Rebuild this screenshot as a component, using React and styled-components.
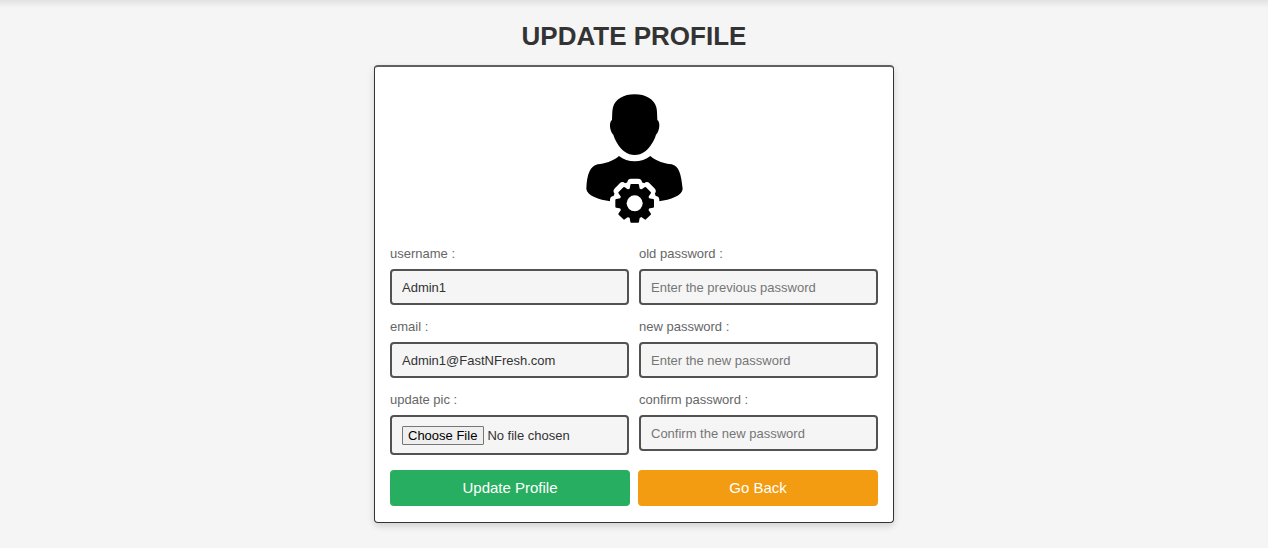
import React from "react";
import styled, { createGlobalStyle } from "styled-components";

const GlobalStyle = createGlobalStyle`
  *, *::before, *::after { box-sizing: border-box; }
  body {
    margin: 0;
    background: #f5f5f5;
    color: #333;
    font-family: Arial, "Liberation Sans", sans-serif;
    font-size: 13px;
  }
`;

const Header = styled.header`
  height: 8px;
  background: linear-gradient(#e2e2e2, #f5f5f5);
`;

const Page = styled.main`
  padding: 13px 16px 24px;
`;

const Title = styled.h1`
  margin: 0 0 14px;
  font-size: 26px;
  line-height: 30px;
  font-weight: bold;
  text-align: center;
  text-transform: uppercase;
  color: #333;
`;

const Card = styled.form`
  max-width: 520px;
  margin: 0 auto;
  padding: 15px 15px 16px;
  background: #fff;
  border: 1px solid #333;
  border-top: 2px solid #606060;
  border-radius: 4px;
  box-shadow: 0 3px 7px rgba(0, 0, 0, 0.15);
`;

const Avatar = styled.svg`
  display: block;
  width: 122px;
  height: 146px;
  margin: 2px auto 16px;
`;

const Columns = styled.div`
  display: flex;
  align-items: flex-start;
  gap: 10px;
  margin-bottom: 15px;
`;

const Column = styled.div`
  flex: 1;
  min-width: 0;
  display: flex;
  flex-direction: column;
  gap: 14px;
`;

const Field = styled.div`
  display: flex;
  flex-direction: column;
  gap: 7px;
`;

const Label = styled.label`
  line-height: 16px;
  color: #666;
`;

const TextInput = styled.input`
  width: 100%;
  height: 36px;
  padding: 0 10px;
  border: 2px solid #525252;
  border-radius: 4px;
  background: #f5f5f5;
  color: #333;
  font: inherit;

  &::placeholder {
    color: #757575;
  }
`;

const FileInput = styled(TextInput)`
  height: 40px;
  padding: 9px 10px;

  &::file-selector-button {
    height: 19px;
    margin: 0 3px 0 0;
    padding: 0 6px 0 5px;
    border: 1px solid #767676;
    border-radius: 1px;
    background: #efefef;
    color: #000;
    font: inherit;
  }
`;

const Actions = styled.div`
  display: flex;
  gap: 8px;
`;

const Button = styled.button`
  flex: 1;
  height: 36px;
  padding: 0 20px 2px;
  border: 0;
  border-radius: 4px;
  background: ${({ $color }) => $color};
  color: #fff;
  font-family: inherit;
  font-size: 15px;
  cursor: pointer;
`;

const teeth = [0, 45, 90, 135, 180, 225, 270, 315];

function UserGearIcon() {
  return (
    <Avatar viewBox="-2 0 366 438" role="img" aria-label="profile picture">
      <path d="M183 31C216 31 241 45 248 70C251 82 250 96 251 108C261 114 258 142 247 152C242 169 229 190 215 202C204 211 193 213 183 213C173 213 162 211 151 202C137 190 124 169 119 152C108 142 105 114 115 108C116 96 115 82 118 70C125 45 150 31 183 31Z" />
      <path d="M136 216C161 237 205 237 230 216C249 233 273 238 294 241C316 247 322 268 327 315C326 335 290 347 256 352L110 352C76 347 40 335 38 315C40 268 50 247 72 241C93 238 117 233 136 216Z" />
      <g fill="#fff">
        <circle cx="183" cy="358" r="67" />
        {teeth.map((angle) => (
          <rect key={angle} x="161" y="284" width="44" height="34" rx="12" transform={`rotate(${angle} 183 358)`} />
        ))}
      </g>
      <circle cx="183" cy="358" r="46" />
      {teeth.map((angle) => (
        <path key={angle} d="M173 300H193Q196 300 196 303L199 320H167L170 303Q170 300 173 300Z" transform={`rotate(${angle} 183 358)`} />
      ))}
      <circle cx="183" cy="358" r="24" fill="#fff" />
    </Avatar>
  );
}

const accountFields = [
  { id: "username", label: "username :", type: "text", defaultValue: "Admin1" },
  { id: "email", label: "email :", type: "email", defaultValue: "Admin1@FastNFresh.com" },
];

const passwordFields = [
  { id: "old-password", label: "old password :", placeholder: "Enter the previous password" },
  { id: "new-password", label: "new password :", placeholder: "Enter the new password" },
  { id: "confirm-password", label: "confirm password :", placeholder: "Confirm the new password" },
];

export default function App() {
  return (
    <>
      <GlobalStyle />
      <Header />
      <Page>
        <Title>Update Profile</Title>
        <Card onSubmit={(event) => event.preventDefault()}>
          <UserGearIcon />
          <Columns>
            <Column>
              {accountFields.map(({ id, label, ...input }) => (
                <Field key={id}>
                  <Label htmlFor={id}>{label}</Label>
                  <TextInput id={id} name={id} {...input} />
                </Field>
              ))}
              <Field>
                <Label htmlFor="picture">update pic :</Label>
                <FileInput id="picture" name="picture" type="file" accept="image/*" />
              </Field>
            </Column>
            <Column>
              {passwordFields.map(({ id, label, placeholder }) => (
                <Field key={id}>
                  <Label htmlFor={id}>{label}</Label>
                  <TextInput id={id} name={id} type="password" placeholder={placeholder} />
                </Field>
              ))}
            </Column>
          </Columns>
          <Actions>
            <Button type="submit" $color="#27ae60">Update Profile</Button>
            <Button type="button" $color="#f39c12">Go Back</Button>
          </Actions>
        </Card>
      </Page>
    </>
  );
}
